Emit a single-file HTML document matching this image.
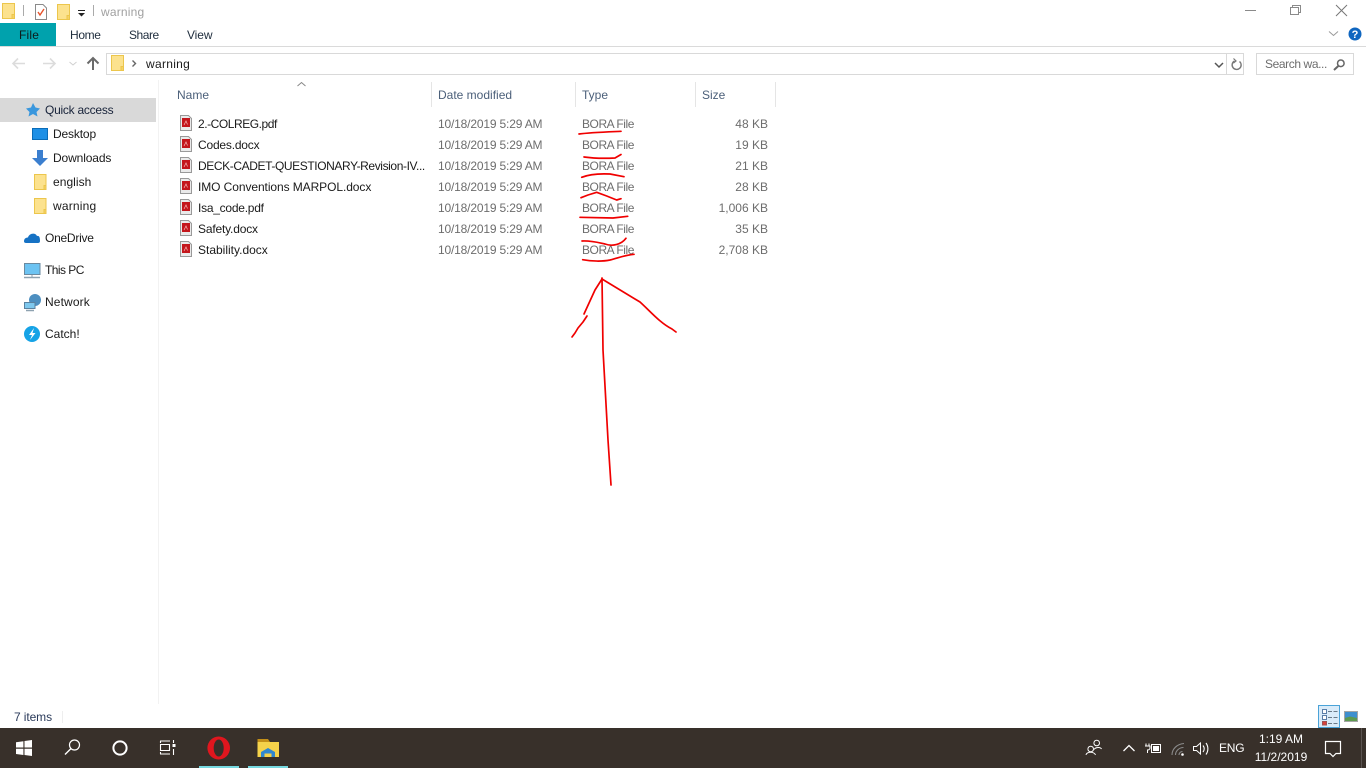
<!DOCTYPE html>
<html><head><meta charset="utf-8"><title>warning</title>
<style>
html,body{margin:0;padding:0;background:#fff;width:1366px;height:768px;overflow:hidden}
body{font-family:"Liberation Sans",sans-serif;font-size:12px;color:#1a1a1a;position:relative}
.t{position:absolute;white-space:nowrap;line-height:16px}
.g{color:#6d6d6d}
.d{letter-spacing:-.17px;left:438px}
.b{letter-spacing:-.45px;left:582px}
.h{color:#4c607a}
svg{position:absolute;overflow:visible}
.r{text-align:right;width:60px}
</style></head><body>
<!-- title bar -->
<svg style="left:0;top:0" width="140" height="24">
<path d="M2.500 3.500H14.500V18.500H2.500Z" fill="#fce28e" stroke="#ecc64c"/><path d="M12 14.500H14.500V18.500H12Z" fill="#f6d365" stroke="#ecc64c"/>
<path d="M23.500 5V16" stroke="#aaa"/>
<path d="M35.500 4.500H43L46.500 8V19.500H35.500Z" fill="#fff" stroke="#8a8a8a"/><path d="M38 12L40 15L44 9" fill="none" stroke="#e8532b" stroke-width="1.400"/>
<path d="M57.500 4.500H69.500V19.500H57.500Z" fill="#fce28e" stroke="#ecc64c"/><path d="M67 15.500H69.500V19.500H67Z" fill="#f6d365" stroke="#ecc64c"/>
<path d="M78 10.500H85" stroke="#222"/><path d="M78 13H85L81.500 16.500Z" fill="#222"/>
<path d="M93.500 5V16" stroke="#aaa"/>
</svg>
<div class="t" style="left:101px;top:4px;color:#a0a0a0;letter-spacing:.2px">warning</div>
<svg style="left:1240px;top:0" width="126" height="20" fill="none" stroke="#8a8a8a">
<path d="M5 10.500H16"/><path d="M50.500 7.500H58.500V14.500H50.500Z"/><path d="M52.500 7V5.500H60.500V12.500H59"/>
<path d="M96 5L107 16M107 5L96 16" stroke="#777"/>
</svg>
<!-- ribbon -->
<div style="position:absolute;left:0;top:23px;width:56px;height:23px;background:#00a2ad"></div>
<div class="t" style="left:19px;top:27px;letter-spacing:.2px;color:#0c1c1c">File</div>
<div class="t" style="left:70px;top:27px;color:#1f2d3d;letter-spacing:-.35px">Home</div>
<div class="t" style="left:129px;top:27px;color:#1f2d3d;letter-spacing:-.45px">Share</div>
<div class="t" style="left:187px;top:27px;color:#1f2d3d;letter-spacing:-.1px">View</div>
<div style="position:absolute;left:0;top:46px;width:1366px;height:1px;background:#dadada"></div>
<svg style="left:1320px;top:24px" width="46" height="20">
<path d="M9 7.500L13.500 11.500L18 7.500" fill="none" stroke="#999"/>
<circle cx="35" cy="10" r="6.500" fill="#0f66c0"/>
<text x="35" y="14" font-family="Liberation Sans" font-size="11" font-weight="700" fill="#fff" text-anchor="middle">?</text>
</svg>
<!-- nav bar -->
<svg style="left:10px;top:54px" width="95" height="20" fill="none">
<path d="M3 9.500H15M8 4.500L3 9.500L8 14.500" stroke="#dcdcdc" stroke-width="1.600"/>
<path d="M33 9.500H45M40 4.500L45 9.500L40 14.500" stroke="#dcdcdc" stroke-width="1.600"/>
<path d="M59.500 8L63 11L66.500 8" stroke="#d0d0d0"/>
<path d="M83 16V4M77.500 9.500L83 4L88.500 9.500" stroke="#6a6a6a" stroke-width="2"/>
</svg>
<div style="position:absolute;left:106px;top:53px;width:1119px;height:20px;border:1px solid #d9d9d9"></div>
<div style="position:absolute;left:1226px;top:53px;width:16px;height:20px;border:1px solid #d9d9d9"></div>
<svg style="left:110px;top:54px" width="30" height="20">
<path d="M1.500 1.500H13.500V16.500H1.500Z" fill="#fce28e" stroke="#ecc64c"/><path d="M11 12.500H13.500V16.500H11Z" fill="#f6d365" stroke="#ecc64c"/>
<path d="M22.500 6.500L25.500 9.500L22.500 12.500" fill="none" stroke="#666" stroke-width="1.400"/>
</svg>
<div class="t" style="left:146px;top:56px;color:#1a1a1a;letter-spacing:.3px">warning</div>
<svg style="left:1210px;top:54px" width="40" height="20" fill="none">
<path d="M5 9L9 13L13 9" stroke="#555" stroke-width="1.500"/>
<path d="M29.500 7.500A4.500 4.500 0 1 1 24.500 7" stroke="#777" stroke-width="1.400"/>
<path d="M23.500 4.500L26 7L23.500 9" stroke="#777" stroke-width="1.200"/>
</svg>
<div style="position:absolute;left:1256px;top:53px;width:96px;height:20px;border:1px solid #d9d9d9"></div>
<div class="t g" style="left:1265px;top:56px;letter-spacing:-.4px">Search wa...</div>
<svg style="left:1332px;top:57px" width="16" height="16" fill="none" stroke="#666" stroke-width="1.500">
<circle cx="8.800" cy="6.300" r="3.300"/><path d="M6.300 9L2 13" stroke-width="2"/>
</svg>
<!-- sidebar -->
<div style="position:absolute;left:0;top:98px;width:156px;height:24px;background:#d9d9d9"></div>
<div style="position:absolute;left:158px;top:80px;width:1px;height:624px;background:#f2f2f2"></div>
<svg style="left:0;top:98px" width="60" height="250">
<path d="M33 5L35.500 9.500L40 10.500L36.500 14L37.500 18.500L33 16L28.500 18.500L29.500 14L26 10.500L31 9.500Z" fill="#3a97dd"/>
<path d="M32.500 30.500H47.500V41.500H32.500Z" fill="#1e90e6" stroke="#0a6cb8"/>
<path d="M37 52H43V60H48L40 68L32 60H37Z" fill="#3b7fcf"/>
<path d="M34.500 76.500H46V91.500H34.500Z" fill="#fce28e" stroke="#ecc64c"/><path d="M44 87.500H46V91.500H44Z" fill="#f6d365" stroke="#ecc64c"/>
<path d="M34.500 100.500H46V115.500H34.500Z" fill="#fce28e" stroke="#ecc64c"/><path d="M44 111.500H46V115.500H44Z" fill="#f6d365" stroke="#ecc64c"/>
<path d="M24 143.500C24 140.500 26 139.500 28 139.500C29 135.500 35 134 37 138C39.500 137.500 40 140 40 143C40 144.500 39 145 38 145H26C25 145 24 144.500 24 143.500Z" fill="#1672c4"/>
<path d="M24.500 165.500H40V176.500H24.500Z" fill="#6cc3f2" stroke="#6a8aa0"/><path d="M24 179.500H40" stroke="#8ea2b0" stroke-width="1.500"/><path d="M32 177V179" stroke="#8ea2b0"/>
<circle cx="35" cy="202" r="6" fill="#4d8fc0"/>
<path d="M24.500 204.500H35V210.500H24.500Z" fill="#7ec8ee" stroke="#5a82a0"/><path d="M26 212.500H34" stroke="#8ea2b0" stroke-width="1.500"/>
<circle cx="32" cy="236" r="8" fill="#16a3e6"/>
<path d="M34 230L29 237H32L30 242L35.500 235H32.500Z" fill="#fff"/>
</svg>
<div class="t" style="left:45px;top:102px;color:#18233a;letter-spacing:-.25px">Quick access</div>
<div class="t" style="left:53px;top:126px;letter-spacing:-.15px">Desktop</div>
<div class="t" style="left:53px;top:150px;letter-spacing:-.12px">Downloads</div>
<div class="t" style="left:53px;top:174px;letter-spacing:.05px">english</div>
<div class="t" style="left:53px;top:198px;letter-spacing:.2px">warning</div>
<div class="t" style="left:45px;top:230px;letter-spacing:-.25px">OneDrive</div>
<div class="t" style="left:45px;top:262px;letter-spacing:-.55px">This PC</div>
<div class="t" style="left:45px;top:294px;letter-spacing:.12px">Network</div>
<div class="t" style="left:45px;top:326px">Catch!</div>
<!-- headers -->
<svg style="left:296px;top:80px" width="12" height="8"><path d="M1.500 6L5.500 2.500L9.500 6" fill="none" stroke="#888"/></svg>
<div class="t h" style="left:177px;top:87px">Name</div>
<div class="t h" style="left:438px;top:87px">Date modified</div>
<div class="t h" style="left:582px;top:87px">Type</div>
<div class="t h" style="left:702px;top:87px">Size</div>
<div style="position:absolute;left:431px;top:82px;width:1px;height:25px;background:#e5e5e5"></div>
<div style="position:absolute;left:575px;top:82px;width:1px;height:25px;background:#e5e5e5"></div>
<div style="position:absolute;left:695px;top:82px;width:1px;height:25px;background:#e5e5e5"></div>
<div style="position:absolute;left:775px;top:82px;width:1px;height:25px;background:#e5e5e5"></div>
<!-- file icons -->
<svg style="left:180px;top:115px" width="14" height="140">
<g><path d="M.500 .500H8.500L11.500 3.500V15.500H.500Z" fill="#eaeaea" stroke="#999"/><rect x="2" y="3" width="8" height="9" fill="#c4161c"/><path d="M4 10L6 6L7.500 9.500" stroke="#f5b5b5" fill="none" stroke-width=".7"/></g>
<g transform="translate(0,21)"><path d="M.500 .500H8.500L11.500 3.500V15.500H.500Z" fill="#eaeaea" stroke="#999"/><rect x="2" y="3" width="8" height="9" fill="#c4161c"/><path d="M4 10L6 6L7.500 9.500" stroke="#f5b5b5" fill="none" stroke-width=".7"/></g>
<g transform="translate(0,42)"><path d="M.500 .500H8.500L11.500 3.500V15.500H.500Z" fill="#eaeaea" stroke="#999"/><rect x="2" y="3" width="8" height="9" fill="#c4161c"/><path d="M4 10L6 6L7.500 9.500" stroke="#f5b5b5" fill="none" stroke-width=".7"/></g>
<g transform="translate(0,63)"><path d="M.500 .500H8.500L11.500 3.500V15.500H.500Z" fill="#eaeaea" stroke="#999"/><rect x="2" y="3" width="8" height="9" fill="#c4161c"/><path d="M4 10L6 6L7.500 9.500" stroke="#f5b5b5" fill="none" stroke-width=".7"/></g>
<g transform="translate(0,84)"><path d="M.500 .500H8.500L11.500 3.500V15.500H.500Z" fill="#eaeaea" stroke="#999"/><rect x="2" y="3" width="8" height="9" fill="#c4161c"/><path d="M4 10L6 6L7.500 9.500" stroke="#f5b5b5" fill="none" stroke-width=".7"/></g>
<g transform="translate(0,105)"><path d="M.500 .500H8.500L11.500 3.500V15.500H.500Z" fill="#eaeaea" stroke="#999"/><rect x="2" y="3" width="8" height="9" fill="#c4161c"/><path d="M4 10L6 6L7.500 9.500" stroke="#f5b5b5" fill="none" stroke-width=".7"/></g>
<g transform="translate(0,126)"><path d="M.500 .500H8.500L11.500 3.500V15.500H.500Z" fill="#eaeaea" stroke="#999"/><rect x="2" y="3" width="8" height="9" fill="#c4161c"/><path d="M4 10L6 6L7.500 9.500" stroke="#f5b5b5" fill="none" stroke-width=".7"/></g>
</svg>
<!-- rows -->
<div class="t" style="left:198px;top:116px;letter-spacing:-.45px">2.-COLREG.pdf</div>
<div class="t" style="left:198px;top:137px;letter-spacing:-.2px">Codes.docx</div>
<div class="t" style="left:198px;top:158px;letter-spacing:-.4px">DECK-CADET-QUESTIONARY-Revision-IV...</div>
<div class="t" style="left:198px;top:179px;letter-spacing:-.08px">IMO Conventions MARPOL.docx</div>
<div class="t" style="left:198px;top:200px;letter-spacing:-.25px">Isa_code.pdf</div>
<div class="t" style="left:198px;top:221px;letter-spacing:-.18px">Safety.docx</div>
<div class="t" style="left:198px;top:242px">Stability.docx</div>

<div class="t g d" style="top:116px">10/18/2019 5:29 AM</div>
<div class="t g d" style="top:137px">10/18/2019 5:29 AM</div>
<div class="t g d" style="top:158px">10/18/2019 5:29 AM</div>
<div class="t g d" style="top:179px">10/18/2019 5:29 AM</div>
<div class="t g d" style="top:200px">10/18/2019 5:29 AM</div>
<div class="t g d" style="top:221px">10/18/2019 5:29 AM</div>
<div class="t g d" style="top:242px">10/18/2019 5:29 AM</div>

<div class="t g b" style="top:116px">BORA File</div>
<div class="t g b" style="top:137px">BORA File</div>
<div class="t g b" style="top:158px">BORA File</div>
<div class="t g b" style="top:179px">BORA File</div>
<div class="t g b" style="top:200px">BORA File</div>
<div class="t g b" style="top:221px">BORA File</div>
<div class="t g b" style="top:242px">BORA File</div>

<div class="t g r" style="left:708px;top:116px">48 KB</div>
<div class="t g r" style="left:708px;top:137px">19 KB</div>
<div class="t g r" style="left:708px;top:158px">21 KB</div>
<div class="t g r" style="left:708px;top:179px">28 KB</div>
<div class="t g r" style="left:708px;top:200px">1,006 KB</div>
<div class="t g r" style="left:708px;top:221px">35 KB</div>
<div class="t g r" style="left:708px;top:242px">2,708 KB</div>
<!-- red ink -->
<svg style="left:0;top:0" width="1366" height="768" fill="none" stroke="#f00000" stroke-width="1.700" stroke-linecap="round" stroke-linejoin="round">
<path d="M579 134C590 132.500 605 132 621 131.300"/>
<path d="M584 157C595 158.500 605 158.500 615 158L621 154.500"/>
<path d="M581.700 177.300C590 174 600 173.500 610 174L624 176.700"/>
<path d="M581 197.700L588 195L596.700 192.300L606.700 196L616.700 200L621 198.700"/>
<path d="M580 217.300L613 218L627.700 216.300"/>
<path d="M582 241C592 240.500 600 243 605 244C612 246.500 621 245 626 238.300"/>
<path d="M582.700 259.700C592 261.500 603 261.500 610 260C618 258 626 254.800 634 254.300"/>
<path d="M602 278L603 350L608 440L611 485"/>
<path d="M602 279L595 290L584 314"/>
<path d="M587 316L583 322L578 328L575 333L572 337"/>
<path d="M602 279L640 302C650 311 660 323 672 329L676 332"/>
</svg>
<!-- status -->
<div class="t" style="left:14px;top:709px;color:#2a3a5a;letter-spacing:-.1px">7 items</div>
<div style="position:absolute;left:62px;top:711px;width:1px;height:12px;background:#eee"></div>
<div style="position:absolute;left:1318px;top:705px;height:21px;width:20px;background:#d9ebf9;border:1px solid #4aa3d8"></div>
<svg style="left:1320px;top:708px" width="44" height="18">
<path d="M2.500 1.500H6.500V5.500H2.500Z" fill="#fff" stroke="#5a7ea8"/><path d="M2.500 7.500H6.500V11.500H2.500Z" fill="#fff" stroke="#5a7ea8"/><path d="M2.500 13.500H6.500V17H2.500Z" fill="#d9413a" stroke="#a05050"/>
<path d="M8 3.500H18M8 9.500H18M8 15.500H18" stroke="#6a7a88" stroke-dasharray="4 1.500"/>
<rect x="24.500" y="3.500" width="13" height="10" fill="#3f8fce" stroke="#a5a5a5"/><path d="M25 13V10L30 8.500L37 10V13Z" fill="#5d9a4f"/>
</svg>
<!-- taskbar -->
<div style="position:absolute;left:0;top:728px;width:1366px;height:40px;background:#38302a"></div>
<div style="position:absolute;left:199px;top:766px;width:40px;height:2px;background:#76d9e0"></div>
<div style="position:absolute;left:248px;top:766px;width:40px;height:2px;background:#76d9e0"></div>
<svg style="left:0;top:728px" width="300" height="40">
<path d="M16 14.300L23.400 13.200V19.500H16ZM24.500 13L32 12V19.500H24.500ZM16 20.700H23.400V27L16 26ZM24.500 20.700H32V28L24.500 27Z" fill="#fff"/>
<circle cx="74.500" cy="17" r="5" fill="none" stroke="#fff" stroke-width="1.200"/><path d="M70.800 20.800L65 26.500" stroke="#fff" stroke-width="1.400"/>
<circle cx="120" cy="20" r="6.600" fill="none" stroke="#fff" stroke-width="2"/>
<path d="M160 13H170M160.500 13V15M160.500 16.500H169.500V22.500H160.500ZM160 26H170M160.500 24V26M173.500 12V15M173.500 21V27" fill="none" stroke="#fff" stroke-width="1.100"/><rect x="172.500" y="16" width="3" height="3" fill="#fff"/>
<ellipse cx="218.700" cy="20" rx="11.300" ry="11.500" fill="#e0161e"/><ellipse cx="218.700" cy="20" rx="5" ry="8.500" fill="#38302a"/>
<path d="M257.500 14H279V29H257.500Z" fill="#f5d24a"/><path d="M257.500 14V11H268L270 14Z" fill="#c49018"/>
<path d="M261 24L268 20L275 24V29H271.500V25.500H264.500V29H261Z" fill="#2f87d0"/>
</svg>
<svg style="left:1070px;top:728px" width="296" height="40" fill="none" stroke="#fff">
<circle cx="26.700" cy="15" r="2.800"/><path d="M24 21.500C25 20 27 19.500 28.500 19.500C30 19.500 31 20 31.500 21"/><circle cx="20.700" cy="21" r="2.800"/><path d="M16 27C16 25.500 18 24.300 20.500 24.300C23 24.300 25 25.500 25.500 27"/>
<path d="M53.500 23L59 17.500L64.500 23" stroke-width="1.300"/>
<path d="M81.500 16.500H90.500V24.500H81.500Z"/><rect x="83" y="18" width="6" height="5" fill="#fff" stroke="none"/><path d="M76 15.500V18M79 15.500V18M75 18H80V20C80 21.500 78.500 22 77.500 22V25" stroke-width="1"/>
<path d="M102 27C102 21 107 16 114 15.500M105.500 27C105.500 23 109 19.500 113.500 19.500M109 27C109 25 110.500 23.500 112.500 23.500" stroke="#8a8a8a" stroke-width="1.100"/><circle cx="112.500" cy="26.500" r="1.300" fill="#fff" stroke="none"/>
<path d="M123.500 18.500H126.500L130.500 15V26L126.500 22.500H123.500Z"/><path d="M133 17.500C134.500 19.500 134.500 22 133 24M136 15C138.500 18.500 138.500 23 136 26.500" stroke-width="1.100"/>
<path d="M255.500 13.500H270.500V25.500H266L263 28.500L260 25.500H255.500Z" stroke-width="1.200"/>
</svg>
<div class="t" style="left:1219px;top:740px;color:#fff;letter-spacing:-.2px">ENG</div>
<div class="t" style="left:1244px;top:731px;width:74px;text-align:center;color:#fff">1:19 AM</div>
<div class="t" style="left:1244px;top:749px;width:74px;text-align:center;color:#fff">11/2/2019</div>
<div style="position:absolute;left:1361px;top:728px;width:1px;height:40px;background:#5a5350"></div>
</body></html>
